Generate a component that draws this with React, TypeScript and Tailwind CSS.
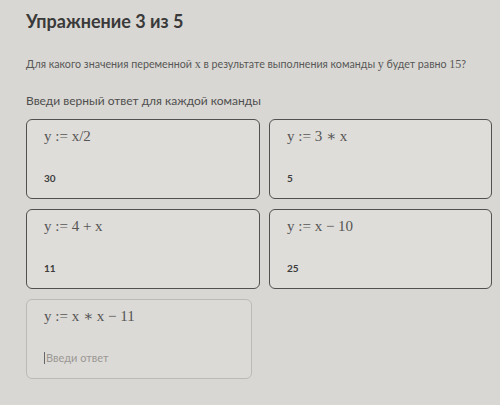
import React from "react";

const serif = { fontFamily: '"Liberation Serif", "DejaVu Serif", serif' };

function Card({ formula, value, input }: { formula: string; value?: string; input?: boolean }) {
  return (
    <div
      className={
        "h-[80px] rounded-[6px] flex flex-col justify-between pl-[17px] pt-[7px] pb-[14px] " +
        (input ? "border border-[#bcbab5] bg-[#dcdad6]" : "border-[1.5px] border-[#505050] bg-[#dfddd9]")
      }
    >
      <div className="text-[15px] leading-[18px] text-[#555]" style={serif}>
        {formula}
      </div>
      {input ? (
        <div className="flex items-center text-[11px] leading-[12px] text-[#9a9894] font-['Lato',sans-serif]">
          <span className="w-px h-[12px] bg-[#666] mr-[1px]" />
          Введи ответ
        </div>
      ) : (
        <div className="text-[10px] leading-[12px] font-bold text-[#3c3c3c] font-['Lato',sans-serif]">{value}</div>
      )}
    </div>
  );
}

export default function App() {
  return (
    <div className="w-[500px] h-[405px] bg-[#d9d7d3] pl-[26px] pt-[9px] font-['Lato',sans-serif] overflow-hidden">
      <h1 className="text-[18px] leading-[24px] font-bold text-[#3a3a3a]">Упражнение 3 из 5</h1>
      <p className="mt-[24px] text-[10.7px] leading-[14px] text-[#575757] whitespace-nowrap">
        Для какого значения переменной <span style={serif} className="text-[12px]">x</span> в результате выполнения
        команды <span style={serif} className="text-[12px]">y</span> будет равно{" "}
        <span style={serif} className="text-[12px]">15</span>?
      </p>
      <p className="mt-[22px] text-[12px] leading-[16px] text-[#4e4e4e]">Введи верный ответ для каждой команды</p>
      <div className="mt-[10px] grid grid-cols-[234px_223px] gap-x-[9px] gap-y-[10px]">
        <Card formula="y := x/2" value="30" />
        <Card formula="y := 3 ∗ x" value="5" />
        <Card formula="y := 4 + x" value="11" />
        <Card formula="y := x − 10" value="25" />
        <div className="w-[226px]">
          <Card formula="y := x ∗ x − 11" input />
        </div>
      </div>
    </div>
  );
}
